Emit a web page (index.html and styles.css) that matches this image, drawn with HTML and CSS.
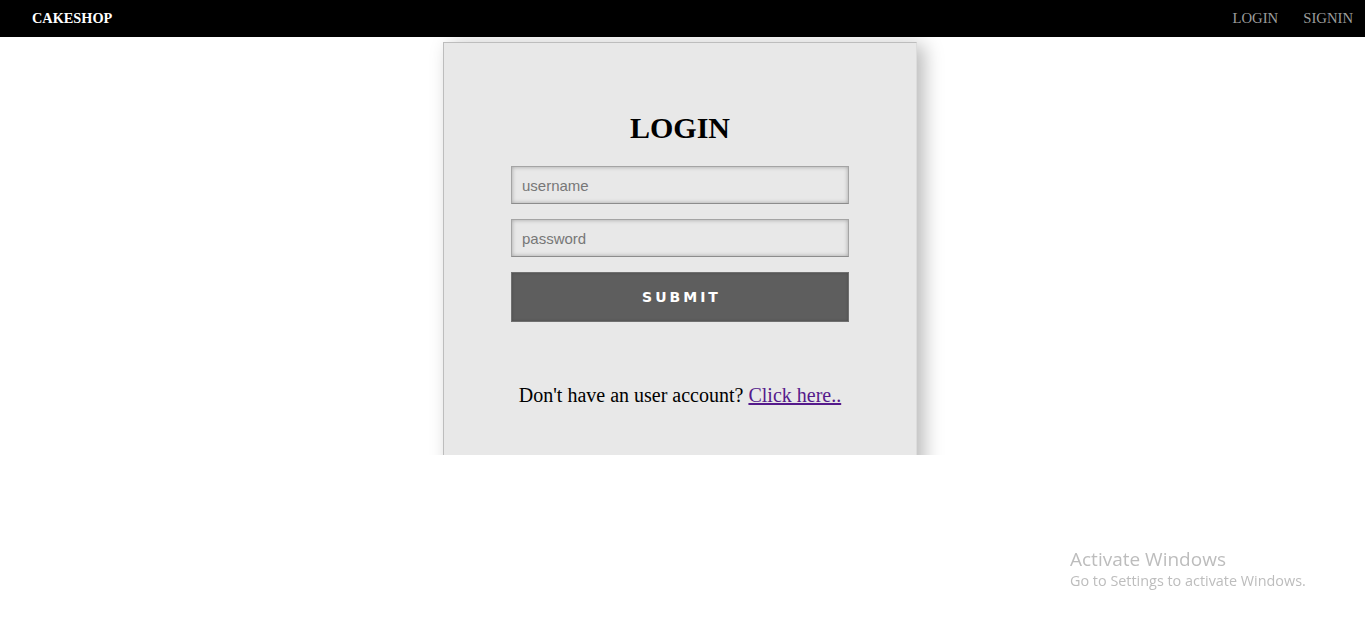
FILE: index.html
```html
<!DOCTYPE html>
<html>
<head>
<meta charset="utf-8">
<link rel="stylesheet" href="styles.css">
</head>
<body>
<nav class="navbar">
  <a class="brand" href="#">CAKESHOP</a>
  <div class="nav-links">
    <a href="#">LOGIN</a>
    <a href="#">SIGNIN</a>
  </div>
</nav>
<main class="stage">
  <div class="card">
    <h2 class="title">LOGIN</h2>
    <form class="form">
      <input class="field" type="text" placeholder="username">
      <input class="field" type="password" placeholder="password">
      <button class="submit" type="button">SUBMIT</button>
    </form>
    <p class="signup">Don't have an user account? <a href="#">Click here..</a></p>
  </div>
</main>
<div class="watermark">
  <div class="wm-title">Activate Windows</div>
  <div class="wm-sub">Go to Settings to activate Windows.</div>
</div>
</body>
</html>
```
FILE: styles.css
```css
html, body {
  margin: 0;
  padding: 0;
  background: #fff;
  font-family: "Liberation Serif", "Times New Roman", serif;
}
.navbar {
  height: 37px;
  background: #000;
  display: flex;
  align-items: center;
  justify-content: space-between;
  padding: 0 12px 0 32px;
}
.brand {
  color: #fff;
  font-weight: bold;
  font-size: 14.3px;
  text-decoration: none;
}
.nav-links {
  display: flex;
  gap: 25px;
}
.nav-links a {
  color: #9d9d9d;
  font-size: 14.7px;
  text-decoration: none;
}
.stage {
  height: 418px;
  overflow: hidden;
  display: flex;
  justify-content: center;
  padding-right: 6px;
}
.card {
  margin-top: 5px;
  width: 472px;
  height: 520px;
  border: 1px solid #bdbdbd;
  border-right-color: #dcdcdc;
  background: #e8e8e8;
  box-shadow: 7px 3px 18px rgba(0,0,0,0.28);
  margin-left: 1px;
  padding-top: 1px;
}
.title {
  margin: 67px 0 0;
  text-align: center;
  font-size: 30px;
  font-weight: bold;
  line-height: 34px;
  color: #000;
}
.form {
  width: 338px;
  margin: 21px auto 0;
  display: flex;
  flex-direction: column;
  gap: 15px;
}
.field {
  box-sizing: border-box;
  height: 38px;
  width: 100%;
  margin: 0;
  padding: 0 10px;
  background: #e8e8e8;
  border: 1px solid #a4a4a4;
  border-bottom-color: #8c8c8c;
  box-shadow: inset 0 0 4px rgba(0,0,0,0.3);
  font-family: "Liberation Sans", Arial, sans-serif;
  font-size: 15px;
  color: #333;
  outline: none;
}
.field::placeholder {
  color: #777;
}
.submit {
  box-sizing: border-box;
  height: 50px;
  width: 100%;
  margin: 0;
  background: #5e5e5e;
  border: 1px solid #707070;
  box-shadow: inset 0 0 3px rgba(0,0,0,0.2);
  color: #fff;
  font-family: "DejaVu Sans", "Liberation Sans", Arial, sans-serif;
  font-weight: bold;
  font-size: 14px;
  letter-spacing: 3px;
  padding: 0 0 0 3px;
}
.signup {
  margin: 62px 0 0;
  text-align: center;
  font-size: 20px;
  color: #000;
}
.signup a {
  color: #551a8b;
}
.watermark {
  position: fixed;
  left: 1070px;
  top: 547px;
  color: #bdbdbd;
  font-family: "Open Sans", "Noto Sans", sans-serif;
}
.wm-title {
  font-size: 19px;
  line-height: 24px;
}
.wm-sub {
  font-size: 14.4px;
  line-height: 20px;
}
```
